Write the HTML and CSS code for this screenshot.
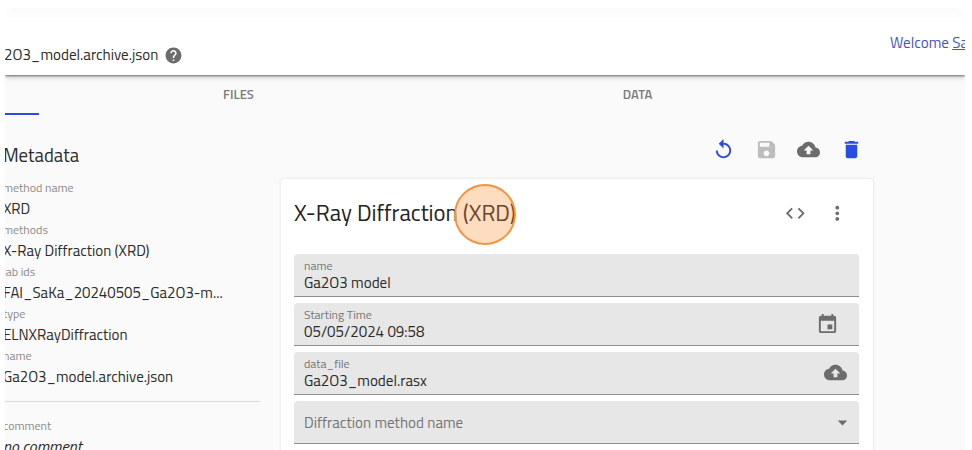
FILE: index.html
```html
<!DOCTYPE html>
<html lang="en">
<head>
<meta charset="utf-8">
<title>Entry data</title>
<link rel="stylesheet" href="styles.css">
</head>
<body>
<div class="window">
  <header class="topbar">
    <div class="crumb"><span>2O3_model.archive.json</span>
      <svg class="help" viewBox="0 0 24 24"><path d="M12 2C6.48 2 2 6.48 2 12s4.48 10 10 10 10-4.48 10-10S17.52 2 12 2zm1 17h-2v-2h2v2zm2.07-7.75l-.9.92C13.45 12.9 13 13.5 13 15h-2v-.5c0-1.1.45-2.1 1.17-2.83l1.24-1.26c.37-.36.59-.86.59-1.41 0-1.1-.9-2-2-2s-2 .9-2 2H8c0-2.21 1.79-4 4-4s4 1.79 4 4c0 .88-.36 1.68-.93 2.25z"/></svg>
    </div>
    <div class="welcome">Welcome <a>Sa</a></div>
  </header>
  <nav class="tabs">
    <div class="tab active"></div>
    <div class="tab">FILES</div>
    <div class="tab">DATA</div>
  </nav>
  <div class="body">
    <aside class="meta">
      <h2>Metadata</h2>
      <dl>
        <dt>method name</dt><dd>XRD</dd>
        <dt>methods</dt><dd>X-Ray Diffraction (XRD)</dd>
        <dt>lab ids</dt><dd>FAI_SaKa_20240505_Ga2O3-m...</dd>
        <dt>type</dt><dd>ELNXRayDiffraction</dd>
        <dt>name</dt><dd>Ga2O3_model.archive.json</dd>
      </dl>
      <dl class="comment">
        <dt>comment</dt><dd><i>no comment</i></dd>
      </dl>
    </aside>
    <main>
      <div class="actions">
        <svg class="blue" viewBox="0 0 24 24"><path d="M12 5V1L7 6l5 5V7c3.31 0 6 2.69 6 6s-2.69 6-6 6-6-2.69-6-6H4c0 4.42 3.58 8 8 8s8-3.58 8-8-3.58-8-8-8z"/></svg>
        <svg class="off" viewBox="0 0 24 24"><path d="M17 3H5c-1.11 0-2 .9-2 2v14c0 1.1.89 2 2 2h14c1.1 0 2-.9 2-2V7l-4-4zm-5 16c-1.66 0-3-1.34-3-3s1.34-3 3-3 3 1.34 3 3-1.34 3-3 3zm3-10H5V5h10v4z"/></svg>
        <svg viewBox="0 0 24 24"><path d="M19.35 10.04C18.67 6.59 15.64 4 12 4 9.11 4 6.6 5.64 5.35 8.04 2.34 8.36 0 10.91 0 14c0 3.31 2.69 6 6 6h13c2.76 0 5-2.24 5-5 0-2.64-2.05-4.78-4.65-4.96zM14 13v4h-4v-4H7l5-5 5 5h-3z"/></svg>
        <svg class="blue" viewBox="0 0 24 24"><path d="M6 19c0 1.1.9 2 2 2h8c1.1 0 2-.9 2-2V7H6v12zM19 4h-3.500l-1-1h-5l-1 1H5v2h14V4z"/></svg>
      </div>
      <section class="card">
        <div class="card-head">
          <h1>X-Ray Diffraction (XRD)<span class="pointer"></span></h1>
          <div class="card-tools">
            <svg viewBox="0 0 24 24"><path d="M9.400 16.600L4.800 12l4.600-4.600L8 6l-6 6 6 6 1.400-1.400zm5.200 0l4.600-4.600-4.600-4.600L16 6l6 6-6 6-1.400-1.400z"/></svg>
            <svg viewBox="0 0 24 24"><path d="M12 8c1.100 0 2-.9 2-2s-.9-2-2-2-2 .9-2 2 .9 2 2 2zm0 2c-1.100 0-2 .9-2 2s.9 2 2 2 2-.9 2-2-.9-2-2-2zm0 6c-1.100 0-2 .9-2 2s.9 2 2 2 2-.9 2-2-.9-2-2-2z"/></svg>
          </div>
        </div>
        <div class="fields">
          <div class="field"><div><label>name</label><p>Ga2O3 model</p></div></div>
          <div class="field"><div><label>Starting Time</label><p>05/05/2024 09:58</p></div>
            <svg class="cal" viewBox="0 0 24 24"><path d="M19 4h-1V2h-2v2H8V2H6v2H5c-1.110 0-1.990.9-1.990 2L3 20c0 1.100.89 2 2 2h14c1.100 0 2-.9 2-2V6c0-1.100-.9-2-2-2zm0 16H5V9h14v11zm-7-7h5v5h-5z"/></svg></div>
          <div class="field"><div><label>data_file</label><p>Ga2O3_model.rasx</p></div>
            <svg class="up" viewBox="0 0 24 24"><path d="M19.350 10.040C18.670 6.590 15.640 4 12 4 9.110 4 6.600 5.640 5.350 8.040 2.340 8.360 0 10.910 0 14c0 3.310 2.690 6 6 6h13c2.760 0 5-2.240 5-5 0-2.640-2.050-4.780-4.650-4.960zM14 13v4h-4v-4H7l5-5 5 5h-3z"/></svg></div>
          <div class="field empty"><div><p>Diffraction method name</p></div>
            <svg class="drop" viewBox="0 0 24 24"><path d="M7 10l5 5 5-5z"/></svg></div>
        </div>
      </section>
    </main>
  </div>
</div>
</body>
</html>
```
FILE: styles.css
```css
* { box-sizing: border-box; margin: 0; padding: 0; }
body {
  height: 450px; overflow: hidden; background: #fff; color: #2b2b2b;
  font: 15.1px/20px "Titillium Web", Roboto, sans-serif;
  padding: 8px 7px 0 5px;
}
svg { display: block; width: 23px; height: 23px; fill: #6c6c6c; flex: none; }
h1, h2, dt, dd, label, p, .crumb { white-space: nowrap; }
.window { height: 442px; overflow: hidden; background: #fafafa; border-radius: 11px 11px 0 0; }
.topbar {
  position: relative; height: 67px; display: flex; justify-content: space-between;
  background: linear-gradient(#f9f9f9, #fff 12px);
  box-shadow: 0 1px 2px rgba(0,0,0,.5), 0 2px 6px rgba(0,0,0,.2);
}
.crumb { display: flex; align-items: center; gap: 6px; height: 20px; margin: 37px 0 0 -1px; }
.help { width: 19px; height: 19px; }
.welcome { width: 75px; margin-top: 25px; white-space: nowrap; color: #3f57c4; }
.welcome a { text-decoration: underline; }
.tabs { display: flex; height: 40px; font-size: 13px; font-weight: 600; color: #7c7c7c; }
.tab { width: 399px; text-align: center; padding-top: 9px; flex: none; }
.tab.active { width: 34px; border-bottom: 2px solid #2a4cdf; height: 40px; }
.body { display: flex; }
.meta { width: 255px; padding-top: 28px; margin-right: 21px; flex: none; }
.meta h2 { font-size: 18.7px; font-weight: 400; line-height: 25px; margin: 0 0 11px -2px; }
.meta dl { padding-bottom: 11.5px; border-bottom: 1px solid #dadada; }
.meta dt { font-size: 12px; line-height: 18px; height: 18px; color: #8a8a8a; margin-left: -2px; }
.meta dd { height: 24.1px; line-height: 23px; margin-left: -2px; font-size: 15px; }
.meta dd i { font-size: 16px; }
.meta .comment { padding-top: 15px; border: 0; }
main { width: 592px; flex: none; }
.actions { display: flex; justify-content: flex-end; gap: 19.7px; padding: 23px 10px 0 0; height: 63.5px; }
.actions .blue { fill: #2a4cdf; }
.actions .off { fill: #bdbdbd; }
.card { height: 300px; background: #fff; border-radius: 4px; padding: 0 14px 0 13px; box-shadow: 0 0 3px rgba(0,0,0,.12); }
.card-head { display: flex; justify-content: space-between; align-items: center; height: 75.5px; padding-bottom: 6px; }
.card h1 { position: relative; font-size: 22.7px; font-weight: 400; line-height: 30px; color: #222; }
.pointer {
  position: absolute; left: 160px; top: -14px; width: 62px; height: 61px; border-radius: 50%;
  background: rgba(250,145,60,.32); border: 2px solid #f6933f;
}
.card-tools { display: flex; gap: 20px; margin-right: 10px; }
.card-tools svg { width: 22.6px; height: 22.6px; }
.fields { display: grid; gap: 6px; }
.field {
  height: 43px; background: #e7e7e7; border-bottom: 1px solid #8f8f8f; border-radius: 4px 4px 0 0;
  padding: 3px 10px 0; display: flex; justify-content: space-between;
}
.field label { display: block; font-size: 12px; line-height: 17px; color: #757575; }
.field p { line-height: 18px; }
.empty p { color: #757575; padding-top: 10px; }
.cal { margin: 6px 10px 0 0; }
.up { margin: 6px 2px 0 0; }
.drop { margin: 7px -5px 0 0; }
```
